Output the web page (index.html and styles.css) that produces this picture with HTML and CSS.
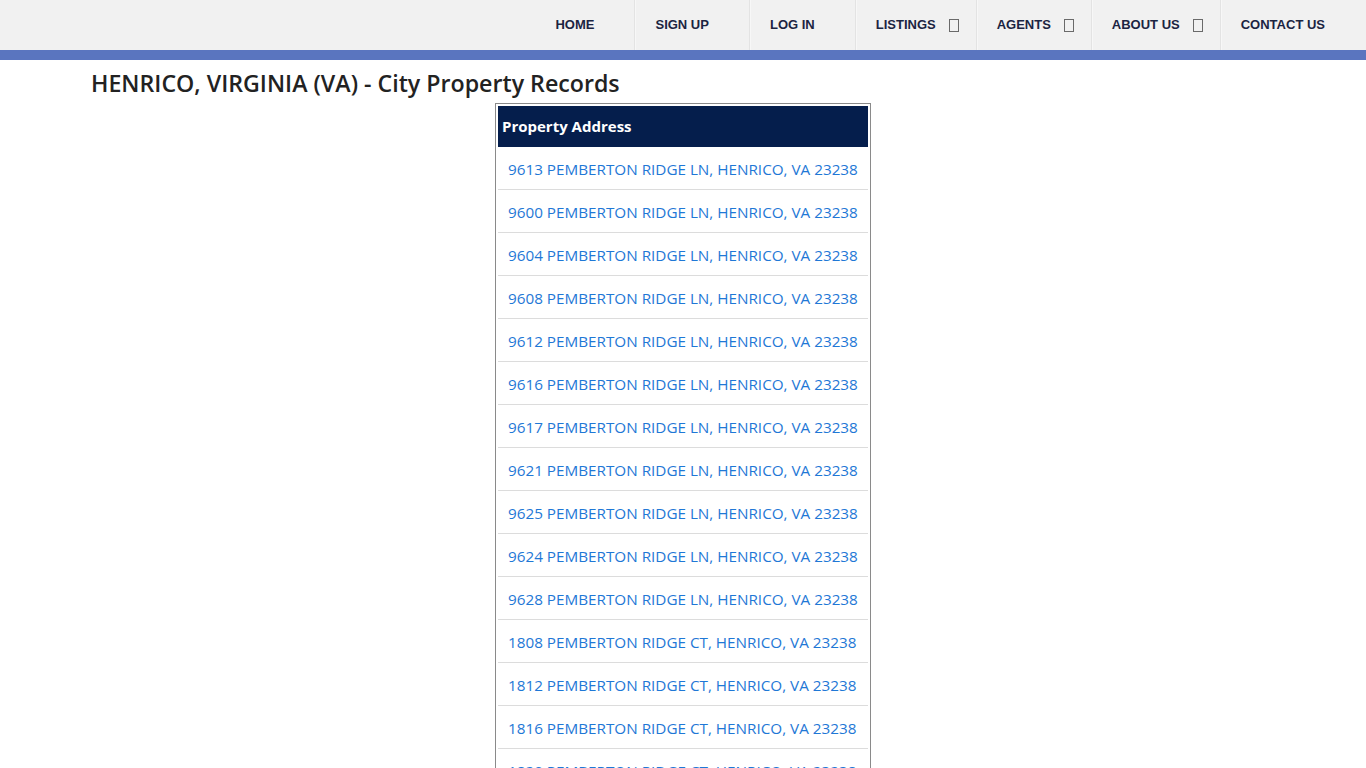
FILE: index.html
```html
<!DOCTYPE html>
<html lang="en">
<head>
<meta charset="utf-8">
<title>HENRICO, VIRGINIA (VA) - City Property Records</title>
<link rel="stylesheet" href="styles.css">
</head>
<body>
<header class="topbar">
  <nav class="menu">
    <a class="menu-item" href="#">HOME</a>
    <a class="menu-item" href="#">SIGN UP</a>
    <a class="menu-item" href="#">LOG IN</a>
    <a class="menu-item has-drop" href="#">LISTINGS<span class="caret"></span></a>
    <a class="menu-item has-drop" href="#">AGENTS<span class="caret"></span></a>
    <a class="menu-item has-drop" href="#">ABOUT US<span class="caret"></span></a>
    <a class="menu-item last" href="#">CONTACT US</a>
  </nav>
</header>
<div class="accent"></div>
<main class="content">
  <h1 class="title">HENRICO, VIRGINIA (VA) - City Property Records</h1>
  <table class="records">
    <thead>
      <tr><th>Property Address</th></tr>
    </thead>
    <tbody>
      <tr><td><a href="#">9613 PEMBERTON RIDGE LN, HENRICO, VA 23238</a></td></tr>
      <tr><td><a href="#">9600 PEMBERTON RIDGE LN, HENRICO, VA 23238</a></td></tr>
      <tr><td><a href="#">9604 PEMBERTON RIDGE LN, HENRICO, VA 23238</a></td></tr>
      <tr><td><a href="#">9608 PEMBERTON RIDGE LN, HENRICO, VA 23238</a></td></tr>
      <tr><td><a href="#">9612 PEMBERTON RIDGE LN, HENRICO, VA 23238</a></td></tr>
      <tr><td><a href="#">9616 PEMBERTON RIDGE LN, HENRICO, VA 23238</a></td></tr>
      <tr><td><a href="#">9617 PEMBERTON RIDGE LN, HENRICO, VA 23238</a></td></tr>
      <tr><td><a href="#">9621 PEMBERTON RIDGE LN, HENRICO, VA 23238</a></td></tr>
      <tr><td><a href="#">9625 PEMBERTON RIDGE LN, HENRICO, VA 23238</a></td></tr>
      <tr><td><a href="#">9624 PEMBERTON RIDGE LN, HENRICO, VA 23238</a></td></tr>
      <tr><td><a href="#">9628 PEMBERTON RIDGE LN, HENRICO, VA 23238</a></td></tr>
      <tr><td><a href="#">1808 PEMBERTON RIDGE CT, HENRICO, VA 23238</a></td></tr>
      <tr><td><a href="#">1812 PEMBERTON RIDGE CT, HENRICO, VA 23238</a></td></tr>
      <tr><td><a href="#">1816 PEMBERTON RIDGE CT, HENRICO, VA 23238</a></td></tr>
      <tr><td><a href="#">1820 PEMBERTON RIDGE CT, HENRICO, VA 23238</a></td></tr>
      <tr><td><a href="#">1824 PEMBERTON RIDGE CT, HENRICO, VA 23238</a></td></tr>
    </tbody>
  </table>
</main>
</body>
</html>
```
FILE: styles.css
```css
* { box-sizing: border-box; }
html, body { margin: 0; padding: 0; background: #fff; }
body { font-family: "Open Sans", "Noto Sans", sans-serif; color: #222; }

.topbar {
  height: 50px;
  background: #f1f1f1;
  display: flex;
  justify-content: flex-end;
}
.menu { display: flex; height: 50px; }
.menu-item {
  display: flex;
  align-items: center;
  height: 50px;
  padding: 0 40px 1px 20px;
  font-family: "Liberation Sans", Arial, sans-serif;
  font-weight: bold;
  font-size: 13px;
  color: #1b2442;
  text-decoration: none;
  border-left: 1px solid #e3e3e3;
  box-shadow: inset 1px 0 0 #f7f7f7;
}
.menu-item:first-child { border-left-color: transparent; box-shadow: none; }
.menu-item.has-drop { padding-right: 17px; }
.menu-item.last { padding-right: 41px; }
.caret {
  display: inline-block;
  width: 10px;
  height: 13px;
  margin-left: 13px;
  margin-top: 2px;
  border: 1px solid #6a6a6a;
}
.accent { height: 10px; background: #5a75bf; }

.content { padding: 0 0 0 91px; }
.title {
  margin: 7px 0 4px 0;
  font-size: 23.2px;
  line-height: 32px;
  font-weight: 600;
  color: #222;
}
.records {
  margin: 0 auto 0 404px;
  width: 376px;
  border: 1px solid #8a8a8a;
  border-spacing: 2px;
}
.records th {
  background: #051e4c;
  color: #fff;
  text-align: left;
  font-size: 15px;
  font-weight: 700;
  height: 41px;
  padding: 0 4px 2px 4px;
}
.records td {
  height: 41px;
  padding: 0 10px;
  border-bottom: 1px solid #dcdcdc;
  white-space: nowrap;
  font-size: 15.25px;
}
.records td a { color: #1f78d6; text-decoration: none; }
```
